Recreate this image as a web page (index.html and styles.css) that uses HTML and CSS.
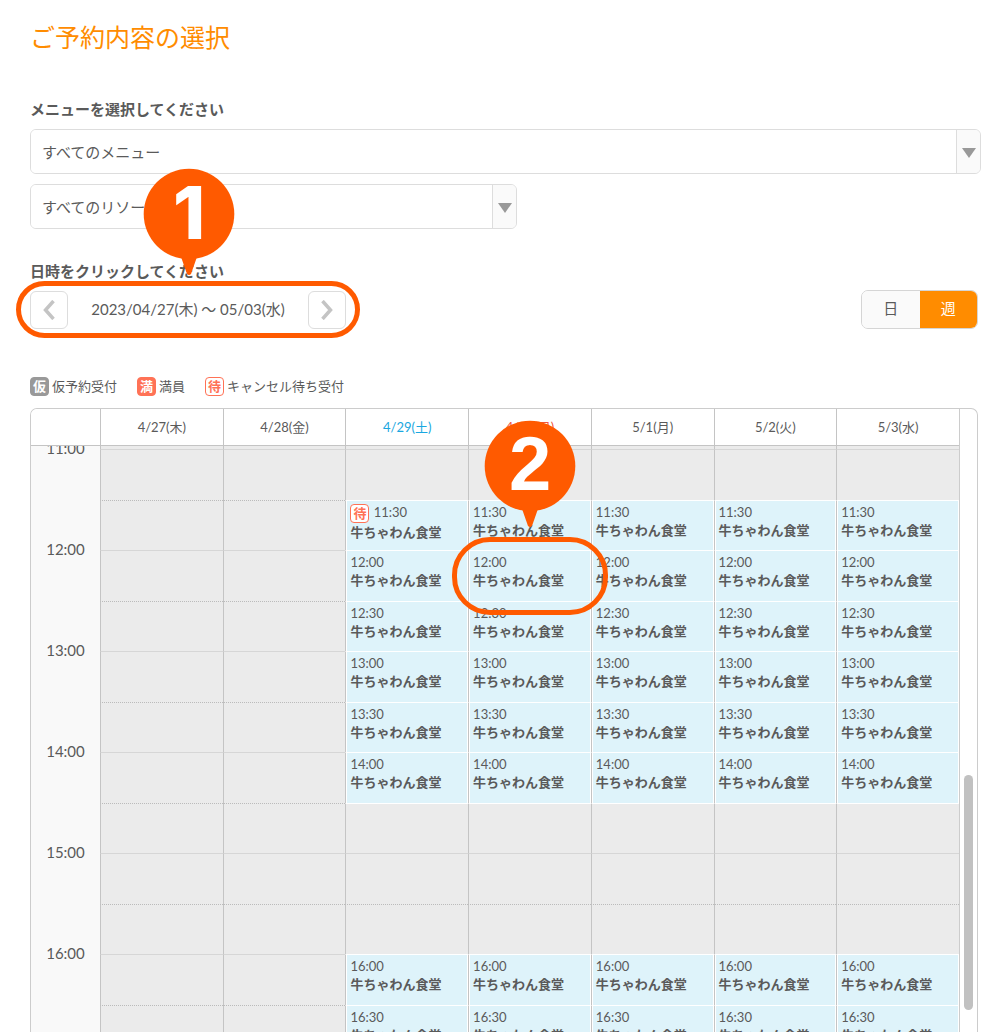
FILE: index.html
```html
<!DOCTYPE html>
<html lang="ja">
<head>
<meta charset="utf-8">
<title>ご予約内容の選択</title>
<meta name="viewport" content="width=device-width, initial-scale=1">
<link rel="stylesheet" href="styles.css">
</head>
<body>
<main class="page">
  <h1 class="title">ご予約内容の選択</h1>

  <label class="label" for="menu">メニューを選択してください</label>
  <div class="select">
    <select id="menu"><option>すべてのメニュー</option></select>
  </div>
  <div class="select select-half">
    <select id="resource" aria-label="リソース"><option>すべてのリソース</option></select>
  </div>

  <h2 class="label label-date">日時をクリックしてください</h2>
  <div class="toolbar">
    <div class="range">
      <button class="step" type="button" aria-label="前の週"><svg width="12" height="20" viewBox="0 0 12 20"><path d="M10.500 1 2.500 10l8 9"/></svg></button>
      <span class="dates">2023/04/27(木) 〜 05/03(水)</span>
      <button class="step" type="button" aria-label="次の週"><svg width="12" height="20" viewBox="0 0 12 20"><path d="M1.500 1 9.500 10l-8 9"/></svg></button>
      <span class="ring ring-range"></span>
      <span class="pin pin-range"><svg width="92" height="108" viewBox="0 0 92 108"><circle cx="46" cy="46" r="45.300"/><path d="M37 86h18l-7 20q-2 2-4 0z"/></svg><b>1</b></span>
    </div>
    <div class="toggle">
      <button type="button">日</button>
      <button type="button" class="active">週</button>
    </div>
  </div>

  <ul class="legend">
    <li><span class="badge badge-temp">仮</span>仮予約受付</li>
    <li><span class="badge badge-full">満</span>満員</li>
    <li><span class="badge badge-wait">待</span>キャンセル待ち受付</li>
  </ul>

  <section class="calendar">
    <table>
      <colgroup><col class="col-time"><col span="7"></colgroup>
      <thead>
        <tr><th></th><th>4/27(木)</th><th>4/28(金)</th><th class="sat">4/29(土)</th><th class="sun">4/30(日)</th><th>5/1(月)</th><th>5/2(火)</th><th>5/3(水)</th></tr>
      </thead>
      <tbody>
        <tr class="edge"><th></th><td></td><td></td><td></td><td></td><td></td><td></td><td></td></tr>
        <tr class="hour"><th rowspan="2"><span>11:00</span></th><td></td><td></td><td></td><td></td><td></td><td></td><td></td></tr>
        <tr class="half"><td></td><td></td>
          <td class="open"><a href="#"><span class="badge badge-wait">待</span> 11:30<b>牛ちゃわん食堂</b></a></td>
          <td class="open"><a href="#">11:30<b>牛ちゃわん食堂</b></a></td>
          <td class="open"><a href="#">11:30<b>牛ちゃわん食堂</b></a></td>
          <td class="open"><a href="#">11:30<b>牛ちゃわん食堂</b></a></td>
          <td class="open"><a href="#">11:30<b>牛ちゃわん食堂</b></a></td></tr>
        <tr class="hour"><th rowspan="2"><span>12:00</span></th><td></td><td></td>
          <td class="open"><a href="#">12:00<b>牛ちゃわん食堂</b></a></td>
          <td class="open marked"><a href="#">12:00<b>牛ちゃわん食堂</b></a>
            <span class="ring ring-slot"></span>
            <span class="pin pin-slot"><svg width="92" height="108" viewBox="0 0 92 108"><circle cx="46" cy="46" r="45.300"/><path d="M37 86h18l-7 20q-2 2-4 0z"/></svg><b>2</b></span></td>
          <td class="open"><a href="#">12:00<b>牛ちゃわん食堂</b></a></td>
          <td class="open"><a href="#">12:00<b>牛ちゃわん食堂</b></a></td>
          <td class="open"><a href="#">12:00<b>牛ちゃわん食堂</b></a></td></tr>
        <tr class="half"><td></td><td></td>
          <td class="open"><a href="#">12:30<b>牛ちゃわん食堂</b></a></td>
          <td class="open"><a href="#">12:30<b>牛ちゃわん食堂</b></a></td>
          <td class="open"><a href="#">12:30<b>牛ちゃわん食堂</b></a></td>
          <td class="open"><a href="#">12:30<b>牛ちゃわん食堂</b></a></td>
          <td class="open"><a href="#">12:30<b>牛ちゃわん食堂</b></a></td></tr>
        <tr class="hour"><th rowspan="2"><span>13:00</span></th><td></td><td></td>
          <td class="open"><a href="#">13:00<b>牛ちゃわん食堂</b></a></td>
          <td class="open"><a href="#">13:00<b>牛ちゃわん食堂</b></a></td>
          <td class="open"><a href="#">13:00<b>牛ちゃわん食堂</b></a></td>
          <td class="open"><a href="#">13:00<b>牛ちゃわん食堂</b></a></td>
          <td class="open"><a href="#">13:00<b>牛ちゃわん食堂</b></a></td></tr>
        <tr class="half"><td></td><td></td>
          <td class="open"><a href="#">13:30<b>牛ちゃわん食堂</b></a></td>
          <td class="open"><a href="#">13:30<b>牛ちゃわん食堂</b></a></td>
          <td class="open"><a href="#">13:30<b>牛ちゃわん食堂</b></a></td>
          <td class="open"><a href="#">13:30<b>牛ちゃわん食堂</b></a></td>
          <td class="open"><a href="#">13:30<b>牛ちゃわん食堂</b></a></td></tr>
        <tr class="hour"><th rowspan="2"><span>14:00</span></th><td></td><td></td>
          <td class="open"><a href="#">14:00<b>牛ちゃわん食堂</b></a></td>
          <td class="open"><a href="#">14:00<b>牛ちゃわん食堂</b></a></td>
          <td class="open"><a href="#">14:00<b>牛ちゃわん食堂</b></a></td>
          <td class="open"><a href="#">14:00<b>牛ちゃわん食堂</b></a></td>
          <td class="open"><a href="#">14:00<b>牛ちゃわん食堂</b></a></td></tr>
        <tr class="half"><td></td><td></td><td class="after"></td><td class="after"></td><td class="after"></td><td class="after"></td><td class="after"></td></tr>
        <tr class="hour"><th rowspan="2"><span>15:00</span></th><td></td><td></td><td></td><td></td><td></td><td></td><td></td></tr>
        <tr class="half"><td></td><td></td><td></td><td></td><td></td><td></td><td></td></tr>
        <tr class="hour"><th rowspan="2"><span>16:00</span></th><td></td><td></td>
          <td class="open"><a href="#">16:00<b>牛ちゃわん食堂</b></a></td>
          <td class="open"><a href="#">16:00<b>牛ちゃわん食堂</b></a></td>
          <td class="open"><a href="#">16:00<b>牛ちゃわん食堂</b></a></td>
          <td class="open"><a href="#">16:00<b>牛ちゃわん食堂</b></a></td>
          <td class="open"><a href="#">16:00<b>牛ちゃわん食堂</b></a></td></tr>
        <tr class="half"><td></td><td></td>
          <td class="open"><a href="#">16:30<b>牛ちゃわん食堂</b></a></td>
          <td class="open"><a href="#">16:30<b>牛ちゃわん食堂</b></a></td>
          <td class="open"><a href="#">16:30<b>牛ちゃわん食堂</b></a></td>
          <td class="open"><a href="#">16:30<b>牛ちゃわん食堂</b></a></td>
          <td class="open"><a href="#">16:30<b>牛ちゃわん食堂</b></a></td></tr>
      </tbody>
    </table>
    <div class="scroll"><div class="thumb"></div></div>
  </section>
</main>
</body>
</html>
```
FILE: styles.css
```css
* { box-sizing: border-box; }

body {
  margin: 0;
  background: #fff;
  color: #5a5a5a;
  font: 15px/22px Lato, "Noto Sans CJK JP", sans-serif;
}

button, select { font: inherit; color: inherit; }

.page {
  display: flex;
  flex-direction: column;
  height: 100vh;
  padding: 19px 19px 0 30px;
  overflow: hidden;
}

.title {
  margin: 0 0 43px;
  color: #ff8c00;
  font-size: 25px;
  font-weight: 400;
  line-height: 36px;
}

.label {
  margin: 0 0 9px;
  font-size: 15px;
  font-weight: 700;
}

.label-date { margin-top: 21px; }

/* Drop-downs */
.select {
  display: flex;
  flex: none;
  position: relative;
  height: 45px;
  margin-bottom: 10px;
  border: 1px solid #ddd;
  border-radius: 6px;
  overflow: hidden;
}

.select-half { width: 487px; max-width: 100%; }

.select select {
  flex: 1;
  appearance: none;
  padding: 0 11px;
  border: 0;
  background: #fff;
}

.select::before {
  content: "";
  order: 1;
  width: 23px;
  border-left: 1px solid #ddd;
  background: #fafafa;
}

.select::after {
  content: "";
  position: absolute;
  top: 18px;
  right: 4px;
  border: 7px solid transparent;
  border-top: 10px solid #999;
  border-bottom: 0;
}

/* Date range and view switch */
.toolbar {
  display: flex;
  justify-content: space-between;
  margin: -1px 3px 0 0;
}

.range {
  display: flex;
  position: relative;
  align-items: center;
  width: 316px;
}

.dates { flex: 1; padding-bottom: 2px; text-align: center; white-space: nowrap; }

.step {
  display: grid;
  place-items: center;
  width: 38px;
  height: 38px;
  padding: 0;
  border: 1px solid #ddd;
  border-radius: 6px;
  background: #fff;
}

.step path { fill: none; stroke: #c4c4c4; stroke-width: 3.5; }

.toggle {
  display: flex;
  width: 117px;
  height: 39px;
  border: 1px solid #d5d5d5;
  border-radius: 7px;
  overflow: hidden;
}

.toggle button { flex: 1; padding: 0 0 4px; border: 0; background: #fafafa; }
.toggle .active { background: #ff8c00; color: #fff; }

/* Legend */
.legend {
  display: flex;
  gap: 20px;
  margin: 47px 0 12px;
  padding: 0;
  list-style: none;
  font-size: 13px;
  line-height: 20px;
}

.legend li { display: flex; align-items: center; gap: 3px; }

.badge {
  display: inline-block;
  width: 19px;
  height: 19px;
  border: 1px solid;
  border-radius: 4px;
  font-size: 13px;
  font-weight: 700;
  line-height: 17px;
  text-align: center;
}

.badge-temp { border-color: #999; background: #999; color: #fff; }
.badge-full { border-color: #ff7256; background: #ff7256; color: #fff; }
.badge-wait { border-color: #ff7256; background: #fff; color: #ff7256; }

/* Week calendar */
.calendar {
  display: flex;
  flex: 1;
  align-items: flex-start;
  min-height: 0;
  margin-right: 3px;
  border: 1px solid #ccc;
  border-bottom: 0;
  border-radius: 7px 7px 0 0;
  overflow: hidden;
}

table {
  flex: 1;
  width: 100%;
  table-layout: fixed;
  border-collapse: separate;
  border-spacing: 0;
  border-right: 1px solid #ccc;
}

.col-time { width: 69px; }

th, td { padding: 0; font-weight: 400; }

thead th {
  position: relative;
  z-index: 1;
  height: 37px;
  border-bottom: 1px solid #c4c4c4;
  background: #fff;
  font-size: 13px;
}

thead th + th { border-left: 1px solid #c4c4c4; }
.sat { color: #1aa7e0; }
.sun { color: #f0563c; }

tbody th { background: #f9f9f9; vertical-align: top; }
tbody th span { display: block; margin-top: -12px; }

td {
  border-top: 1px solid #d6d6d6;
  border-left: 1px solid #c4c4c4;
  background: #ebebeb;
  vertical-align: top;
}

.edge td { height: 3px; border-top: 0; }
.hour td { height: 51px; }
.half td { height: 50px; border-top: 1px dotted #bbb; }

.hour td.open, .half td.open {
  background: #def3fa;
  border-top: 1px solid #fff;
  box-shadow: inset 1px 0 #fff, inset -1px 0 #fff;
}

.half td.after { border-top: 1px solid #fff; }

td a {
  display: block;
  padding: 2px 0 0 4px;
  color: #5a5a5a;
  font-size: 13px;
  line-height: 18px;
  text-decoration: none;
  white-space: nowrap;
}

td a b { display: block; }
td .badge { margin-right: 1px; vertical-align: middle; }

.scroll { width: 17px; padding: 366px 4px 0; }
.thumb { height: 235px; border-radius: 5px; background: #c1c1c1; }

/* Numbered callouts */
.marked { position: relative; z-index: 2; }

.ring {
  position: absolute;
  border: 5px solid #ff5a00;
  border-radius: 38px;
  pointer-events: none;
}

.ring-range { inset: -9px -14px; }
.ring-slot { inset: -14px -17px; }

.pin {
  position: absolute;
  width: 92px;
  height: 108px;
  pointer-events: none;
}

.pin svg { display: block; fill: #ff5a00; }

.pin b {
  position: absolute;
  inset: 0 0 auto;
  color: #fff;
  font: 700 76px/88px "Liberation Sans", sans-serif;
  text-align: center;
}

.pin-range { left: 113px; bottom: 53px; }
.pin-range b { font: 800 73px/90px Inter, sans-serif; }
.pin-slot { left: 15px; top: -131px; }
```
